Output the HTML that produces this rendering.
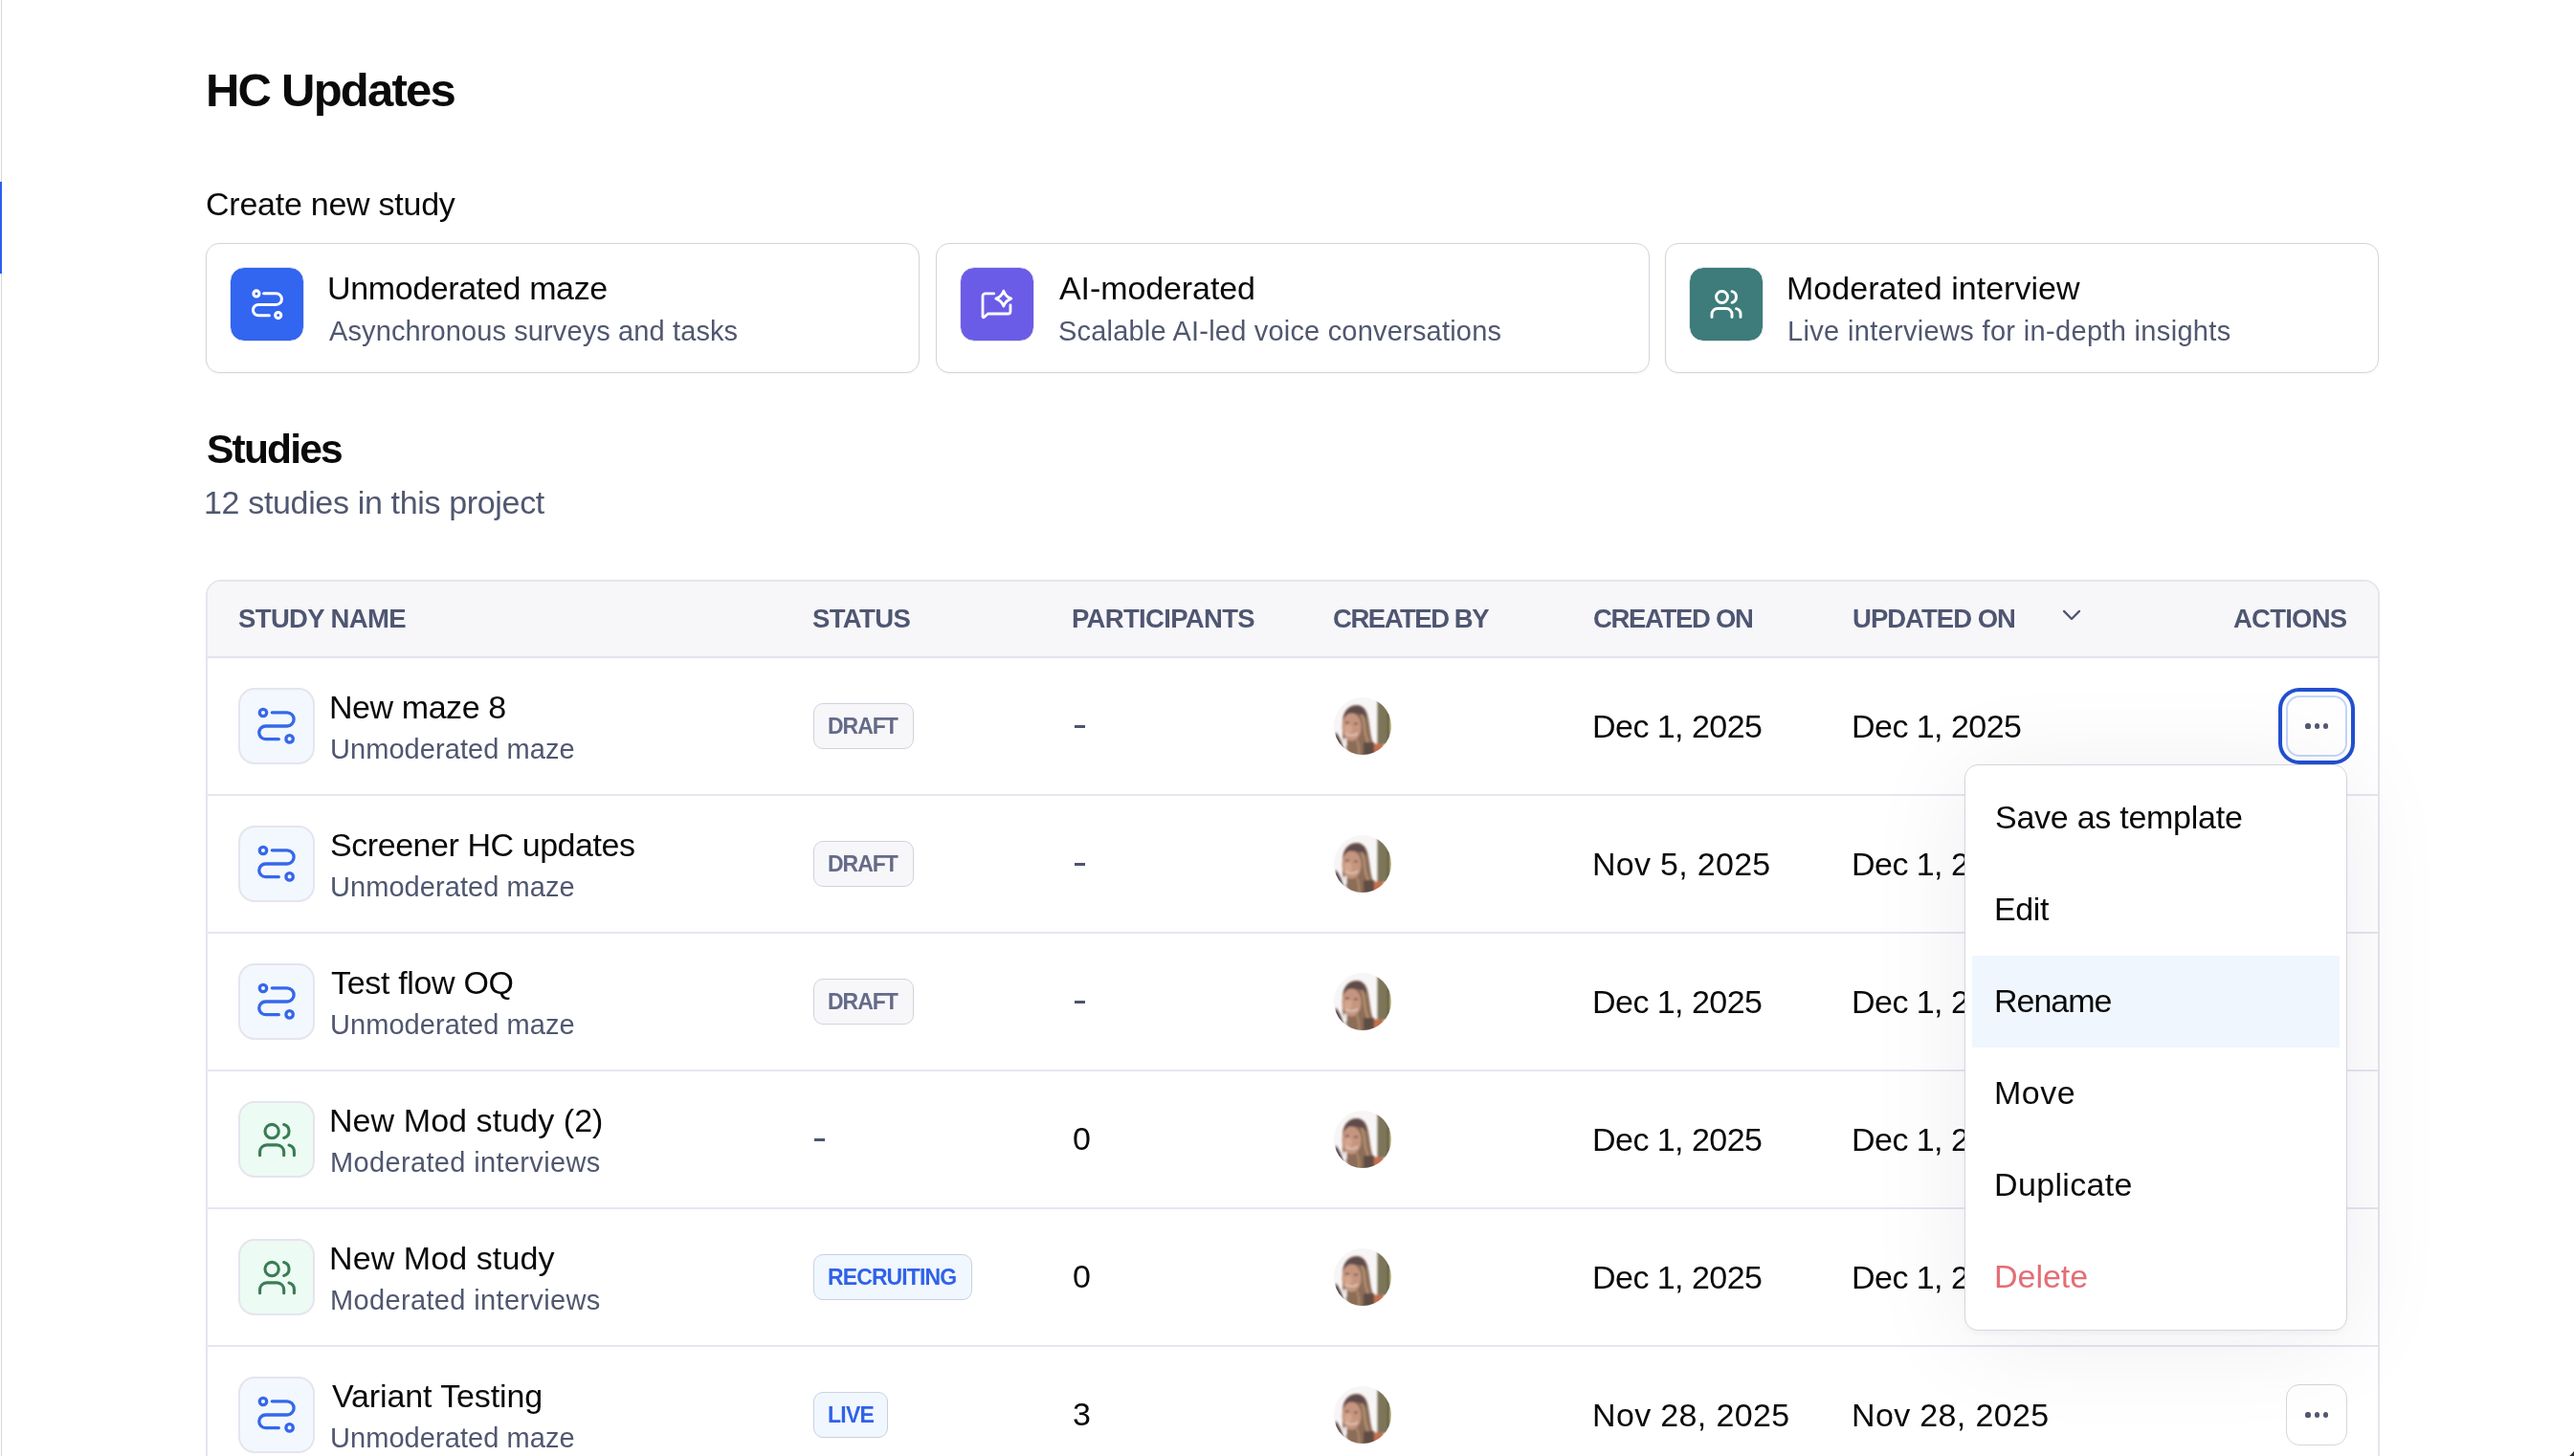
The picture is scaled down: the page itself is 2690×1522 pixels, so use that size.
<!DOCTYPE html>
<html><head><meta charset="utf-8"><title>HC Updates</title>
<style>
html,body{margin:0;padding:0;background:#fff;}
body{width:2690px;height:1522px;overflow:hidden;position:relative;font-family:'Liberation Sans',sans-serif;}
.t{position:absolute;white-space:nowrap;line-height:1;font-family:'Liberation Sans',sans-serif;-webkit-font-smoothing:antialiased;will-change:transform;}
.abs{position:absolute;box-sizing:border-box;}
</style></head><body>

<div class="abs" style="left:1px;top:0;width:1px;height:1522px;background:#d6d6de"></div>
<div class="abs" style="left:0;top:190px;width:2px;height:96px;background:#2b5ff0"></div>
<div class="t" style="left:215.0px;top:70.12px;font-size:49px;font-weight:700;color:#0a0a0a;letter-spacing:-1.78px;">HC Updates</div>
<div class="t" style="left:214.7px;top:196.22px;font-size:34px;font-weight:400;color:#0a0a0a;letter-spacing:-0.25px;">Create new study</div>
<div class="abs" style="left:215px;top:254px;width:746px;height:136px;border:1px solid #d3d4de;border-radius:14px;background:#fff;box-shadow:0 1px 3px rgba(30,30,60,0.04)"></div>
<div class="abs" style="left:240px;top:279px;width:78px;height:78px;border-radius:15px;background:#3265f0;background-clip:padding-box;border:1px solid #e4e2ec;display:flex;align-items:center;justify-content:center"><svg width="33" height="33" viewBox="0 0 40 40" fill="none" stroke="#fff" stroke-width="3.70" stroke-linecap="round" stroke-linejoin="round"><circle cx="6" cy="6" r="3.7"/><path d="M15.3 5.8H31a7.1 7.1 0 0 1 0 14.2H8.6a6.85 6.85 0 0 0 0 13.7H22.3"/><circle cx="33.6" cy="33.4" r="3.7"/></svg></div>
<div class="t" style="left:342.2px;top:284.12px;font-size:34px;font-weight:400;color:#0a0a0a;letter-spacing:-0.36px;">Unmoderated maze</div>
<div class="t" style="left:344.3px;top:331.75px;font-size:29px;font-weight:400;color:#50576f;letter-spacing:0.11px;">Asynchronous surveys and tasks</div>
<div class="abs" style="left:978px;top:254px;width:746px;height:136px;border:1px solid #d3d4de;border-radius:14px;background:#fff;box-shadow:0 1px 3px rgba(30,30,60,0.04)"></div>
<div class="abs" style="left:1003px;top:279px;width:78px;height:78px;border-radius:15px;background:#6b5ce7;background-clip:padding-box;border:1px solid #e4e2ec;display:flex;align-items:center;justify-content:center"><svg width="76" height="76" viewBox="0 0 78 78" fill="none" stroke="#fff" stroke-width="2.90" stroke-linecap="round" stroke-linejoin="round"><path d="M35.6 27.6H26.3A2.7 2.7 0 0 0 23.6 30.3V52.2A0.9 0.9 0 0 0 25.1 52.9L29.2 49.3H50.6A2.7 2.7 0 0 0 53.3 46.6V39.9"/><path d="M46.00 24.80Q48.13 30.87 54.20 33.00Q48.13 35.13 46.00 41.20Q43.87 35.13 37.80 33.00Q43.87 30.87 46.00 24.80Z"/></svg></div>
<div class="t" style="left:1107.0px;top:284.12px;font-size:34px;font-weight:400;color:#0a0a0a;letter-spacing:-0.09px;">AI-moderated</div>
<div class="t" style="left:1106.0px;top:331.75px;font-size:29px;font-weight:400;color:#50576f;letter-spacing:0.20px;">Scalable AI-led voice conversations</div>
<div class="abs" style="left:1740px;top:254px;width:746px;height:136px;border:1px solid #d3d4de;border-radius:14px;background:#fff;box-shadow:0 1px 3px rgba(30,30,60,0.04)"></div>
<div class="abs" style="left:1765px;top:279px;width:78px;height:78px;border-radius:15px;background:#3d7c7a;background-clip:padding-box;border:1px solid #e4e2ec;display:flex;align-items:center;justify-content:center"><svg width="36" height="36" viewBox="0 0 24 24" fill="none" stroke="#fff" stroke-width="1.95" stroke-linecap="round" stroke-linejoin="round"><path d="M16 21v-2a4 4 0 0 0-4-4H6a4 4 0 0 0-4 4v2"/><path d="M16 3.128a4 4 0 0 1 0 7.744"/><path d="M22 21v-2a4 4 0 0 0-3-3.87"/><circle cx="9" cy="7" r="4"/></svg></div>
<div class="t" style="left:1866.8px;top:284.12px;font-size:34px;font-weight:400;color:#0a0a0a;letter-spacing:0.02px;">Moderated interview</div>
<div class="t" style="left:1867.8px;top:331.75px;font-size:29px;font-weight:400;color:#50576f;letter-spacing:0.33px;">Live interviews for in-depth insights</div>
<div class="t" style="left:215.8px;top:449.22px;font-size:42.5px;font-weight:700;color:#0a0a0a;letter-spacing:-1.80px;">Studies</div>
<div class="t" style="left:213.3px;top:508.32px;font-size:34px;font-weight:400;color:#50576f;letter-spacing:-0.34px;">12 studies in this project</div>
<div class="abs" style="left:215px;top:606px;width:2272px;height:1000px;border:2px solid #e5e5ee;border-radius:16px;background:#fff;overflow:hidden">
<div class="abs" style="left:0;top:0;width:100%;height:80px;background:#f7f7fa;border-bottom:2px solid #e4e3ec"></div>
<div class="abs" style="left:0;top:222px;width:100%;height:2px;background:#e6e6ef"></div>
<div class="abs" style="left:0;top:366px;width:100%;height:2px;background:#e6e6ef"></div>
<div class="abs" style="left:0;top:510px;width:100%;height:2px;background:#e6e6ef"></div>
<div class="abs" style="left:0;top:654px;width:100%;height:2px;background:#e6e6ef"></div>
<div class="abs" style="left:0;top:798px;width:100%;height:2px;background:#e6e6ef"></div>
</div>
<div class="t" style="left:248.9px;top:633.22px;font-size:27.5px;font-weight:700;color:#4f5672;letter-spacing:-0.63px;">STUDY NAME</div>
<div class="t" style="left:849.0px;top:633.22px;font-size:27.5px;font-weight:700;color:#4f5672;letter-spacing:-0.64px;">STATUS</div>
<div class="t" style="left:1120.3px;top:633.22px;font-size:27.5px;font-weight:700;color:#4f5672;letter-spacing:-0.68px;">PARTICIPANTS</div>
<div class="t" style="left:1393.0px;top:633.22px;font-size:27.5px;font-weight:700;color:#4f5672;letter-spacing:-1.47px;">CREATED BY</div>
<div class="t" style="left:1665.0px;top:633.22px;font-size:27.5px;font-weight:700;color:#4f5672;letter-spacing:-1.33px;">CREATED ON</div>
<div class="t" style="left:1935.7px;top:633.22px;font-size:27.5px;font-weight:700;color:#4f5672;letter-spacing:-0.98px;">UPDATED ON</div>
<div class="t" style="left:2334.2px;top:633.22px;font-size:27.5px;font-weight:700;color:#4f5672;letter-spacing:-0.77px;">ACTIONS</div>
<svg class="abs" style="left:2154px;top:636px" width="22" height="14" viewBox="0 0 22 14" fill="none" stroke="#4f5672" stroke-width="2.3" stroke-linecap="round" stroke-linejoin="round"><path d="M3 2.9l8 8.1 8-8.1"/></svg>
<div class="abs" style="left:249px;top:719px;width:80px;height:80px;border:2px solid #e6e4ee;border-radius:17px;background:#f2f8fe;display:flex;align-items:center;justify-content:center"><svg width="40" height="40" viewBox="0 0 40 40" fill="none" stroke="#3567ea" stroke-width="3.30" stroke-linecap="round" stroke-linejoin="round"><circle cx="6" cy="6" r="3.7"/><path d="M15.3 5.8H31a7.1 7.1 0 0 1 0 14.2H8.6a6.85 6.85 0 0 0 0 13.7H22.3"/><circle cx="33.6" cy="33.4" r="3.7"/></svg></div>
<div class="t" style="left:343.7px;top:721.72px;font-size:34px;font-weight:400;color:#0a0a0a;letter-spacing:-0.43px;">New maze 8</div>
<div class="t" style="left:344.9px;top:768.65px;font-size:29px;font-weight:400;color:#50576f;letter-spacing:0.06px;">Unmoderated maze</div>
<div class="abs" style="left:850px;top:735px;width:105px;height:48px;border:1px solid #d2d2de;border-radius:10px;background:#f7f7fa"></div>
<div class="t" style="left:865.0px;top:747.83px;font-size:23px;font-weight:700;color:#656a88;letter-spacing:-1.03px;">DRAFT</div>
<div class="abs" style="left:1123px;top:758.1px;width:10.5px;height:2.6px;background:#4d5470"></div>
<svg class="abs" style="left:1394px;top:729px" width="60" height="60" viewBox="0 0 60 60"><defs><clipPath id="av0"><circle cx="30" cy="30" r="30"/></clipPath><filter id="bl0" x="-10%" y="-10%" width="120%" height="120%"><feGaussianBlur stdDeviation="1.1"/></filter></defs><g clip-path="url(#av0)"><rect width="60" height="60" fill="#f7f5f6"/><g filter="url(#bl0)"><rect x="45.5" y="-2" width="12" height="51" fill="#7b7458"/><rect x="56.5" y="-2" width="2.5" height="51" fill="#4f4838"/><rect x="58.5" y="18" width="3" height="30" fill="#d9d08c"/><path d="M2 36 C5 40 8 46 10 52 L12 62 L-2 62 Z" fill="#5d474a"/><path d="M9 24 C10 12 18 7 25 8 C32 9 35 15 36 22 C38 32 38 40 41 48 C43 54 44 58 43 62 L18 62 C14 56 10 48 9 40 Z" fill="#8c6d58"/><path d="M10 22 C11 12 19 8 26 9 C32 10 34 16 34 22 C29 16 18 15 10 22 Z" fill="#5f4b4b"/><ellipse cx="18.5" cy="31" rx="10" ry="14.5" fill="#c6957f"/><ellipse cx="15" cy="33" rx="4" ry="5" fill="#d4a58d"/><path d="M12 26.5h4M21 27.5h4" stroke="#5e4a4a" stroke-width="1.6"/><path d="M12 37.5 C15 40.5 22 40.5 25 37.5" stroke="#dcc3b6" stroke-width="1.8" fill="none"/><path d="M29 18 C33 25 31 34 34 42 C36 48 38 53 37 60" stroke="#b59272" stroke-width="2.2" fill="none"/><path d="M24 44 C26 50 27 55 26 60" stroke="#b08d6e" stroke-width="1.8" fill="none"/><path d="M31 47 L42 47 L43 62 L31 62Z" fill="#5e4e44"/><path d="M42 48.5 L52 48.5 L50 62 L42 62Z" fill="#c2704f"/><rect x="10.5" y="43" width="3" height="8" fill="#f4f0ee"/></g></g></svg>
<div class="t" style="left:1663.5px;top:742.02px;font-size:34px;font-weight:400;color:#0a0a0a;letter-spacing:-0.54px;">Dec 1, 2025</div>
<div class="t" style="left:1935.4px;top:742.02px;font-size:34px;font-weight:400;color:#0a0a0a;letter-spacing:-0.54px;">Dec 1, 2025</div>
<div class="abs" style="left:2389px;top:727px;width:64px;height:64px;border:2px solid #c3d5fb;border-radius:14px;background:#fff;box-shadow:0 0 0 4px #fff,0 0 0 8px #2150d0"></div>
<div class="abs" style="left:2409.4px;top:756.4px;width:5.2px;height:5.2px;border-radius:50%;background:#535873"></div>
<div class="abs" style="left:2418.6px;top:756.4px;width:5.2px;height:5.2px;border-radius:50%;background:#535873"></div>
<div class="abs" style="left:2427.9px;top:756.4px;width:5.2px;height:5.2px;border-radius:50%;background:#535873"></div>
<div class="abs" style="left:249px;top:863px;width:80px;height:80px;border:2px solid #e6e4ee;border-radius:17px;background:#f2f8fe;display:flex;align-items:center;justify-content:center"><svg width="40" height="40" viewBox="0 0 40 40" fill="none" stroke="#3567ea" stroke-width="3.30" stroke-linecap="round" stroke-linejoin="round"><circle cx="6" cy="6" r="3.7"/><path d="M15.3 5.8H31a7.1 7.1 0 0 1 0 14.2H8.6a6.85 6.85 0 0 0 0 13.7H22.3"/><circle cx="33.6" cy="33.4" r="3.7"/></svg></div>
<div class="t" style="left:344.7px;top:865.72px;font-size:34px;font-weight:400;color:#0a0a0a;letter-spacing:-0.44px;">Screener HC updates</div>
<div class="t" style="left:344.9px;top:912.65px;font-size:29px;font-weight:400;color:#50576f;letter-spacing:0.06px;">Unmoderated maze</div>
<div class="abs" style="left:850px;top:879px;width:105px;height:48px;border:1px solid #d2d2de;border-radius:10px;background:#f7f7fa"></div>
<div class="t" style="left:865.0px;top:891.83px;font-size:23px;font-weight:700;color:#656a88;letter-spacing:-1.03px;">DRAFT</div>
<div class="abs" style="left:1123px;top:902.1px;width:10.5px;height:2.6px;background:#4d5470"></div>
<svg class="abs" style="left:1394px;top:873px" width="60" height="60" viewBox="0 0 60 60"><defs><clipPath id="av1"><circle cx="30" cy="30" r="30"/></clipPath><filter id="bl1" x="-10%" y="-10%" width="120%" height="120%"><feGaussianBlur stdDeviation="1.1"/></filter></defs><g clip-path="url(#av1)"><rect width="60" height="60" fill="#f7f5f6"/><g filter="url(#bl1)"><rect x="45.5" y="-2" width="12" height="51" fill="#7b7458"/><rect x="56.5" y="-2" width="2.5" height="51" fill="#4f4838"/><rect x="58.5" y="18" width="3" height="30" fill="#d9d08c"/><path d="M2 36 C5 40 8 46 10 52 L12 62 L-2 62 Z" fill="#5d474a"/><path d="M9 24 C10 12 18 7 25 8 C32 9 35 15 36 22 C38 32 38 40 41 48 C43 54 44 58 43 62 L18 62 C14 56 10 48 9 40 Z" fill="#8c6d58"/><path d="M10 22 C11 12 19 8 26 9 C32 10 34 16 34 22 C29 16 18 15 10 22 Z" fill="#5f4b4b"/><ellipse cx="18.5" cy="31" rx="10" ry="14.5" fill="#c6957f"/><ellipse cx="15" cy="33" rx="4" ry="5" fill="#d4a58d"/><path d="M12 26.5h4M21 27.5h4" stroke="#5e4a4a" stroke-width="1.6"/><path d="M12 37.5 C15 40.5 22 40.5 25 37.5" stroke="#dcc3b6" stroke-width="1.8" fill="none"/><path d="M29 18 C33 25 31 34 34 42 C36 48 38 53 37 60" stroke="#b59272" stroke-width="2.2" fill="none"/><path d="M24 44 C26 50 27 55 26 60" stroke="#b08d6e" stroke-width="1.8" fill="none"/><path d="M31 47 L42 47 L43 62 L31 62Z" fill="#5e4e44"/><path d="M42 48.5 L52 48.5 L50 62 L42 62Z" fill="#c2704f"/><rect x="10.5" y="43" width="3" height="8" fill="#f4f0ee"/></g></g></svg>
<div class="t" style="left:1663.5px;top:886.02px;font-size:34px;font-weight:400;color:#0a0a0a;letter-spacing:0.29px;">Nov 5, 2025</div>
<div class="t" style="left:1935.4px;top:886.02px;font-size:34px;font-weight:400;color:#0a0a0a;letter-spacing:-0.54px;">Dec 1, 2025</div>
<div class="abs" style="left:249px;top:1007px;width:80px;height:80px;border:2px solid #e6e4ee;border-radius:17px;background:#f2f8fe;display:flex;align-items:center;justify-content:center"><svg width="40" height="40" viewBox="0 0 40 40" fill="none" stroke="#3567ea" stroke-width="3.30" stroke-linecap="round" stroke-linejoin="round"><circle cx="6" cy="6" r="3.7"/><path d="M15.3 5.8H31a7.1 7.1 0 0 1 0 14.2H8.6a6.85 6.85 0 0 0 0 13.7H22.3"/><circle cx="33.6" cy="33.4" r="3.7"/></svg></div>
<div class="t" style="left:345.7px;top:1009.72px;font-size:34px;font-weight:400;color:#0a0a0a;letter-spacing:-0.33px;">Test flow OQ</div>
<div class="t" style="left:344.9px;top:1056.65px;font-size:29px;font-weight:400;color:#50576f;letter-spacing:0.06px;">Unmoderated maze</div>
<div class="abs" style="left:850px;top:1023px;width:105px;height:48px;border:1px solid #d2d2de;border-radius:10px;background:#f7f7fa"></div>
<div class="t" style="left:865.0px;top:1035.83px;font-size:23px;font-weight:700;color:#656a88;letter-spacing:-1.03px;">DRAFT</div>
<div class="abs" style="left:1123px;top:1046.1px;width:10.5px;height:2.6px;background:#4d5470"></div>
<svg class="abs" style="left:1394px;top:1017px" width="60" height="60" viewBox="0 0 60 60"><defs><clipPath id="av2"><circle cx="30" cy="30" r="30"/></clipPath><filter id="bl2" x="-10%" y="-10%" width="120%" height="120%"><feGaussianBlur stdDeviation="1.1"/></filter></defs><g clip-path="url(#av2)"><rect width="60" height="60" fill="#f7f5f6"/><g filter="url(#bl2)"><rect x="45.5" y="-2" width="12" height="51" fill="#7b7458"/><rect x="56.5" y="-2" width="2.5" height="51" fill="#4f4838"/><rect x="58.5" y="18" width="3" height="30" fill="#d9d08c"/><path d="M2 36 C5 40 8 46 10 52 L12 62 L-2 62 Z" fill="#5d474a"/><path d="M9 24 C10 12 18 7 25 8 C32 9 35 15 36 22 C38 32 38 40 41 48 C43 54 44 58 43 62 L18 62 C14 56 10 48 9 40 Z" fill="#8c6d58"/><path d="M10 22 C11 12 19 8 26 9 C32 10 34 16 34 22 C29 16 18 15 10 22 Z" fill="#5f4b4b"/><ellipse cx="18.5" cy="31" rx="10" ry="14.5" fill="#c6957f"/><ellipse cx="15" cy="33" rx="4" ry="5" fill="#d4a58d"/><path d="M12 26.5h4M21 27.5h4" stroke="#5e4a4a" stroke-width="1.6"/><path d="M12 37.5 C15 40.5 22 40.5 25 37.5" stroke="#dcc3b6" stroke-width="1.8" fill="none"/><path d="M29 18 C33 25 31 34 34 42 C36 48 38 53 37 60" stroke="#b59272" stroke-width="2.2" fill="none"/><path d="M24 44 C26 50 27 55 26 60" stroke="#b08d6e" stroke-width="1.8" fill="none"/><path d="M31 47 L42 47 L43 62 L31 62Z" fill="#5e4e44"/><path d="M42 48.5 L52 48.5 L50 62 L42 62Z" fill="#c2704f"/><rect x="10.5" y="43" width="3" height="8" fill="#f4f0ee"/></g></g></svg>
<div class="t" style="left:1663.5px;top:1030.02px;font-size:34px;font-weight:400;color:#0a0a0a;letter-spacing:-0.54px;">Dec 1, 2025</div>
<div class="t" style="left:1935.4px;top:1030.02px;font-size:34px;font-weight:400;color:#0a0a0a;letter-spacing:-0.54px;">Dec 1, 2025</div>
<div class="abs" style="left:249px;top:1151px;width:80px;height:80px;border:2px solid #e6e4ee;border-radius:17px;background:#ecfbf3;display:flex;align-items:center;justify-content:center"><svg width="43" height="43" viewBox="0 0 24 24" fill="none" stroke="#3a7c54" stroke-width="1.73" stroke-linecap="round" stroke-linejoin="round"><path d="M16 21v-2a4 4 0 0 0-4-4H6a4 4 0 0 0-4 4v2"/><path d="M16 3.128a4 4 0 0 1 0 7.744"/><path d="M22 21v-2a4 4 0 0 0-3-3.87"/><circle cx="9" cy="7" r="4"/></svg></div>
<div class="t" style="left:343.7px;top:1153.72px;font-size:34px;font-weight:400;color:#0a0a0a;letter-spacing:0.07px;">New Mod study (2)</div>
<div class="t" style="left:344.9px;top:1200.65px;font-size:29px;font-weight:400;color:#50576f;letter-spacing:0.35px;">Moderated interviews</div>
<div class="abs" style="left:851px;top:1190.1px;width:10.5px;height:2.6px;background:#4d5470"></div>
<div class="t" style="left:1120.7px;top:1172.72px;font-size:34px;font-weight:400;color:#0a0a0a;letter-spacing:0.00px;">0</div>
<svg class="abs" style="left:1394px;top:1161px" width="60" height="60" viewBox="0 0 60 60"><defs><clipPath id="av3"><circle cx="30" cy="30" r="30"/></clipPath><filter id="bl3" x="-10%" y="-10%" width="120%" height="120%"><feGaussianBlur stdDeviation="1.1"/></filter></defs><g clip-path="url(#av3)"><rect width="60" height="60" fill="#f7f5f6"/><g filter="url(#bl3)"><rect x="45.5" y="-2" width="12" height="51" fill="#7b7458"/><rect x="56.5" y="-2" width="2.5" height="51" fill="#4f4838"/><rect x="58.5" y="18" width="3" height="30" fill="#d9d08c"/><path d="M2 36 C5 40 8 46 10 52 L12 62 L-2 62 Z" fill="#5d474a"/><path d="M9 24 C10 12 18 7 25 8 C32 9 35 15 36 22 C38 32 38 40 41 48 C43 54 44 58 43 62 L18 62 C14 56 10 48 9 40 Z" fill="#8c6d58"/><path d="M10 22 C11 12 19 8 26 9 C32 10 34 16 34 22 C29 16 18 15 10 22 Z" fill="#5f4b4b"/><ellipse cx="18.5" cy="31" rx="10" ry="14.5" fill="#c6957f"/><ellipse cx="15" cy="33" rx="4" ry="5" fill="#d4a58d"/><path d="M12 26.5h4M21 27.5h4" stroke="#5e4a4a" stroke-width="1.6"/><path d="M12 37.5 C15 40.5 22 40.5 25 37.5" stroke="#dcc3b6" stroke-width="1.8" fill="none"/><path d="M29 18 C33 25 31 34 34 42 C36 48 38 53 37 60" stroke="#b59272" stroke-width="2.2" fill="none"/><path d="M24 44 C26 50 27 55 26 60" stroke="#b08d6e" stroke-width="1.8" fill="none"/><path d="M31 47 L42 47 L43 62 L31 62Z" fill="#5e4e44"/><path d="M42 48.5 L52 48.5 L50 62 L42 62Z" fill="#c2704f"/><rect x="10.5" y="43" width="3" height="8" fill="#f4f0ee"/></g></g></svg>
<div class="t" style="left:1663.5px;top:1174.02px;font-size:34px;font-weight:400;color:#0a0a0a;letter-spacing:-0.54px;">Dec 1, 2025</div>
<div class="t" style="left:1935.4px;top:1174.02px;font-size:34px;font-weight:400;color:#0a0a0a;letter-spacing:-0.54px;">Dec 1, 2025</div>
<div class="abs" style="left:249px;top:1295px;width:80px;height:80px;border:2px solid #e6e4ee;border-radius:17px;background:#ecfbf3;display:flex;align-items:center;justify-content:center"><svg width="43" height="43" viewBox="0 0 24 24" fill="none" stroke="#3a7c54" stroke-width="1.73" stroke-linecap="round" stroke-linejoin="round"><path d="M16 21v-2a4 4 0 0 0-4-4H6a4 4 0 0 0-4 4v2"/><path d="M16 3.128a4 4 0 0 1 0 7.744"/><path d="M22 21v-2a4 4 0 0 0-3-3.87"/><circle cx="9" cy="7" r="4"/></svg></div>
<div class="t" style="left:343.7px;top:1297.72px;font-size:34px;font-weight:400;color:#0a0a0a;letter-spacing:0.09px;">New Mod study</div>
<div class="t" style="left:344.9px;top:1344.65px;font-size:29px;font-weight:400;color:#50576f;letter-spacing:0.35px;">Moderated interviews</div>
<div class="abs" style="left:850px;top:1311px;width:166px;height:48px;border:1px solid #c9d0de;border-radius:10px;background:#f1f7fe"></div>
<div class="t" style="left:865.0px;top:1323.83px;font-size:23px;font-weight:700;color:#2f62e8;letter-spacing:-0.89px;">RECRUITING</div>
<div class="t" style="left:1120.7px;top:1316.72px;font-size:34px;font-weight:400;color:#0a0a0a;letter-spacing:0.00px;">0</div>
<svg class="abs" style="left:1394px;top:1305px" width="60" height="60" viewBox="0 0 60 60"><defs><clipPath id="av4"><circle cx="30" cy="30" r="30"/></clipPath><filter id="bl4" x="-10%" y="-10%" width="120%" height="120%"><feGaussianBlur stdDeviation="1.1"/></filter></defs><g clip-path="url(#av4)"><rect width="60" height="60" fill="#f7f5f6"/><g filter="url(#bl4)"><rect x="45.5" y="-2" width="12" height="51" fill="#7b7458"/><rect x="56.5" y="-2" width="2.5" height="51" fill="#4f4838"/><rect x="58.5" y="18" width="3" height="30" fill="#d9d08c"/><path d="M2 36 C5 40 8 46 10 52 L12 62 L-2 62 Z" fill="#5d474a"/><path d="M9 24 C10 12 18 7 25 8 C32 9 35 15 36 22 C38 32 38 40 41 48 C43 54 44 58 43 62 L18 62 C14 56 10 48 9 40 Z" fill="#8c6d58"/><path d="M10 22 C11 12 19 8 26 9 C32 10 34 16 34 22 C29 16 18 15 10 22 Z" fill="#5f4b4b"/><ellipse cx="18.5" cy="31" rx="10" ry="14.5" fill="#c6957f"/><ellipse cx="15" cy="33" rx="4" ry="5" fill="#d4a58d"/><path d="M12 26.5h4M21 27.5h4" stroke="#5e4a4a" stroke-width="1.6"/><path d="M12 37.5 C15 40.5 22 40.5 25 37.5" stroke="#dcc3b6" stroke-width="1.8" fill="none"/><path d="M29 18 C33 25 31 34 34 42 C36 48 38 53 37 60" stroke="#b59272" stroke-width="2.2" fill="none"/><path d="M24 44 C26 50 27 55 26 60" stroke="#b08d6e" stroke-width="1.8" fill="none"/><path d="M31 47 L42 47 L43 62 L31 62Z" fill="#5e4e44"/><path d="M42 48.5 L52 48.5 L50 62 L42 62Z" fill="#c2704f"/><rect x="10.5" y="43" width="3" height="8" fill="#f4f0ee"/></g></g></svg>
<div class="t" style="left:1663.5px;top:1318.02px;font-size:34px;font-weight:400;color:#0a0a0a;letter-spacing:-0.54px;">Dec 1, 2025</div>
<div class="t" style="left:1935.4px;top:1318.02px;font-size:34px;font-weight:400;color:#0a0a0a;letter-spacing:-0.54px;">Dec 1, 2025</div>
<div class="abs" style="left:249px;top:1439px;width:80px;height:80px;border:2px solid #e6e4ee;border-radius:17px;background:#f2f8fe;display:flex;align-items:center;justify-content:center"><svg width="40" height="40" viewBox="0 0 40 40" fill="none" stroke="#3567ea" stroke-width="3.30" stroke-linecap="round" stroke-linejoin="round"><circle cx="6" cy="6" r="3.7"/><path d="M15.3 5.8H31a7.1 7.1 0 0 1 0 14.2H8.6a6.85 6.85 0 0 0 0 13.7H22.3"/><circle cx="33.6" cy="33.4" r="3.7"/></svg></div>
<div class="t" style="left:346.7px;top:1441.72px;font-size:34px;font-weight:400;color:#0a0a0a;letter-spacing:-0.11px;">Variant Testing</div>
<div class="t" style="left:344.9px;top:1488.65px;font-size:29px;font-weight:400;color:#50576f;letter-spacing:0.06px;">Unmoderated maze</div>
<div class="abs" style="left:850px;top:1455px;width:78px;height:48px;border:1px solid #c9d0de;border-radius:10px;background:#f1f7fe"></div>
<div class="t" style="left:865.0px;top:1467.83px;font-size:23px;font-weight:700;color:#2f62e8;letter-spacing:-0.73px;">LIVE</div>
<div class="t" style="left:1120.7px;top:1460.72px;font-size:34px;font-weight:400;color:#0a0a0a;letter-spacing:0.00px;">3</div>
<svg class="abs" style="left:1394px;top:1449px" width="60" height="60" viewBox="0 0 60 60"><defs><clipPath id="av5"><circle cx="30" cy="30" r="30"/></clipPath><filter id="bl5" x="-10%" y="-10%" width="120%" height="120%"><feGaussianBlur stdDeviation="1.1"/></filter></defs><g clip-path="url(#av5)"><rect width="60" height="60" fill="#f7f5f6"/><g filter="url(#bl5)"><rect x="45.5" y="-2" width="12" height="51" fill="#7b7458"/><rect x="56.5" y="-2" width="2.5" height="51" fill="#4f4838"/><rect x="58.5" y="18" width="3" height="30" fill="#d9d08c"/><path d="M2 36 C5 40 8 46 10 52 L12 62 L-2 62 Z" fill="#5d474a"/><path d="M9 24 C10 12 18 7 25 8 C32 9 35 15 36 22 C38 32 38 40 41 48 C43 54 44 58 43 62 L18 62 C14 56 10 48 9 40 Z" fill="#8c6d58"/><path d="M10 22 C11 12 19 8 26 9 C32 10 34 16 34 22 C29 16 18 15 10 22 Z" fill="#5f4b4b"/><ellipse cx="18.5" cy="31" rx="10" ry="14.5" fill="#c6957f"/><ellipse cx="15" cy="33" rx="4" ry="5" fill="#d4a58d"/><path d="M12 26.5h4M21 27.5h4" stroke="#5e4a4a" stroke-width="1.6"/><path d="M12 37.5 C15 40.5 22 40.5 25 37.5" stroke="#dcc3b6" stroke-width="1.8" fill="none"/><path d="M29 18 C33 25 31 34 34 42 C36 48 38 53 37 60" stroke="#b59272" stroke-width="2.2" fill="none"/><path d="M24 44 C26 50 27 55 26 60" stroke="#b08d6e" stroke-width="1.8" fill="none"/><path d="M31 47 L42 47 L43 62 L31 62Z" fill="#5e4e44"/><path d="M42 48.5 L52 48.5 L50 62 L42 62Z" fill="#c2704f"/><rect x="10.5" y="43" width="3" height="8" fill="#f4f0ee"/></g></g></svg>
<div class="t" style="left:1663.5px;top:1462.02px;font-size:34px;font-weight:400;color:#0a0a0a;letter-spacing:0.35px;">Nov 28, 2025</div>
<div class="t" style="left:1935.4px;top:1462.02px;font-size:34px;font-weight:400;color:#0a0a0a;letter-spacing:0.35px;">Nov 28, 2025</div>
<div class="abs" style="left:2389px;top:1447px;width:64px;height:64px;border:1px solid #d5d5df;border-radius:14px;background:#fff"></div>
<div class="abs" style="left:2409.4px;top:1476.4px;width:5.2px;height:5.2px;border-radius:50%;background:#535873"></div>
<div class="abs" style="left:2418.6px;top:1476.4px;width:5.2px;height:5.2px;border-radius:50%;background:#535873"></div>
<div class="abs" style="left:2427.9px;top:1476.4px;width:5.2px;height:5.2px;border-radius:50%;background:#535873"></div>
<div class="abs" style="left:2053px;top:799px;width:400px;height:592px;border:1px solid #d4d5de;border-radius:14px;background:#fff;box-shadow:0 10px 110px rgba(30,30,70,0.075),0 3px 6px rgba(30,30,70,0.04)"></div>
<div class="abs" style="left:2061px;top:999px;width:384px;height:96px;background:#eff6fe"></div>
<div class="t" style="left:2084.6px;top:836.72px;font-size:34px;font-weight:400;color:#0a0a0a;letter-spacing:-0.26px;">Save as template</div>
<div class="t" style="left:2083.6px;top:932.72px;font-size:34px;font-weight:400;color:#0a0a0a;letter-spacing:-0.37px;">Edit</div>
<div class="t" style="left:2083.6px;top:1028.72px;font-size:34px;font-weight:400;color:#0a0a0a;letter-spacing:-1.00px;">Rename</div>
<div class="t" style="left:2083.6px;top:1124.72px;font-size:34px;font-weight:400;color:#0a0a0a;letter-spacing:0.47px;">Move</div>
<div class="t" style="left:2083.6px;top:1220.72px;font-size:34px;font-weight:400;color:#0a0a0a;letter-spacing:0.34px;">Duplicate</div>
<div class="t" style="left:2083.6px;top:1316.72px;font-size:34px;font-weight:400;color:#e46d74;letter-spacing:-0.04px;">Delete</div>
<svg class="abs" style="left:2684px;top:1516px" width="6" height="6" viewBox="0 0 6 6"><path d="M6 0.8V6H1.2C3 4.6 4.8 2.8 6 0.8Z" fill="#2e3230"/></svg>
</body></html>
